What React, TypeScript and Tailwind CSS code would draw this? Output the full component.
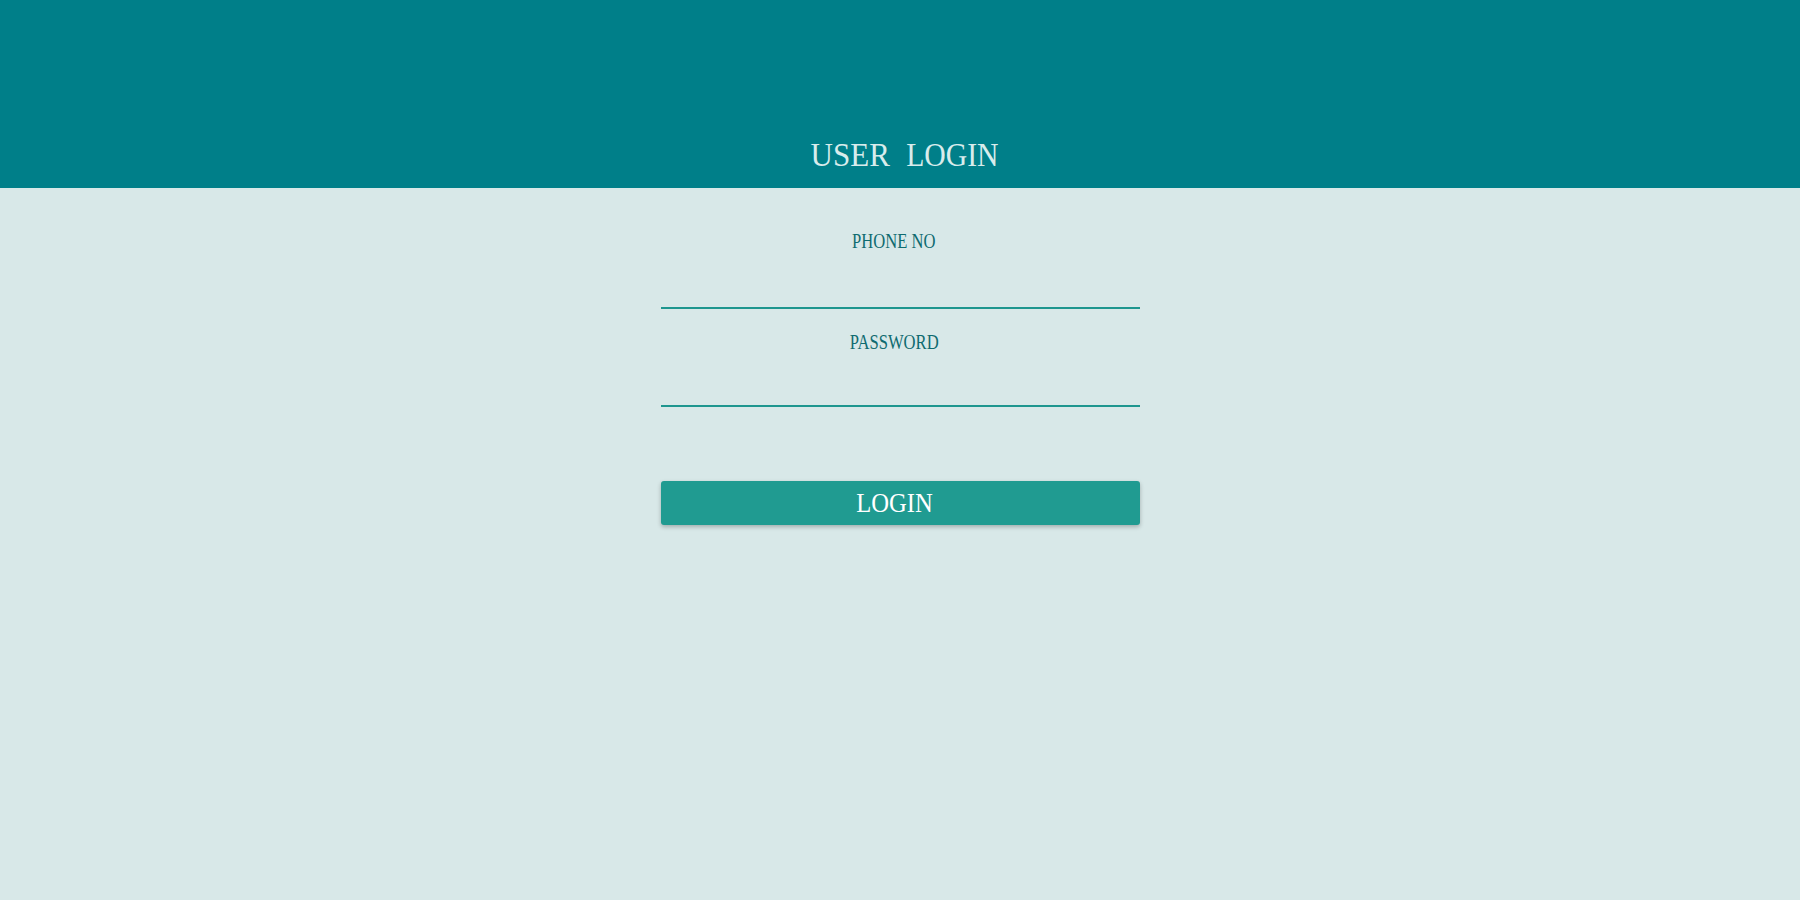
import React from "react";

export default function App() {
  const serif = { fontFamily: '"Liberation Serif", "Times New Roman", serif' };
  return (
    <div className="min-h-[900px] w-full bg-[#d8e8e8]" style={serif}>
      <header className="h-[188px] bg-[#007f89] flex items-end justify-center pb-[16px] pl-[12px]">
        <h1 className="flex gap-[9px] text-[33px] leading-[33px] font-normal text-[#d8ecec]">
          <span className="inline-block scale-x-[0.94]">USER</span>
          <span className="inline-block scale-x-[0.9]">LOGIN</span>
        </h1>
      </header>
      <form className="w-[479px] mx-auto flex flex-col" onSubmit={(e) => e.preventDefault()}>
        <label className="mt-[43px] h-[21px] text-[21px] leading-[21px] text-[#0f6b70] text-center pr-[12px]">
          <span className="inline-block scale-x-[0.79]">PHONE NO</span>
        </label>
        <input
          type="text"
          className="mt-[15px] h-[42px] w-full bg-transparent border-0 border-b-2 border-[#1e968f] outline-none"
        />
        <label className="mt-[23px] h-[21px] text-[21px] leading-[21px] text-[#0f6b70] text-center pr-[12px]">
          <span className="inline-block scale-x-[0.79]">PASSWORD</span>
        </label>
        <input
          type="password"
          className="mt-[12px] h-[42px] w-full bg-transparent border-0 border-b-2 border-[#1e968f] outline-none"
        />
        <button
          type="submit"
          className="mt-[74px] h-[44px] w-full rounded-[3px] bg-[#209b91] text-white text-[28px] leading-[28px] flex items-center justify-center pr-[10px] shadow-[0_2px_4px_rgba(0,0,0,0.25)]"
        >
          <span className="inline-block scale-x-[0.88]">LOGIN</span>
        </button>
      </form>
    </div>
  );
}
